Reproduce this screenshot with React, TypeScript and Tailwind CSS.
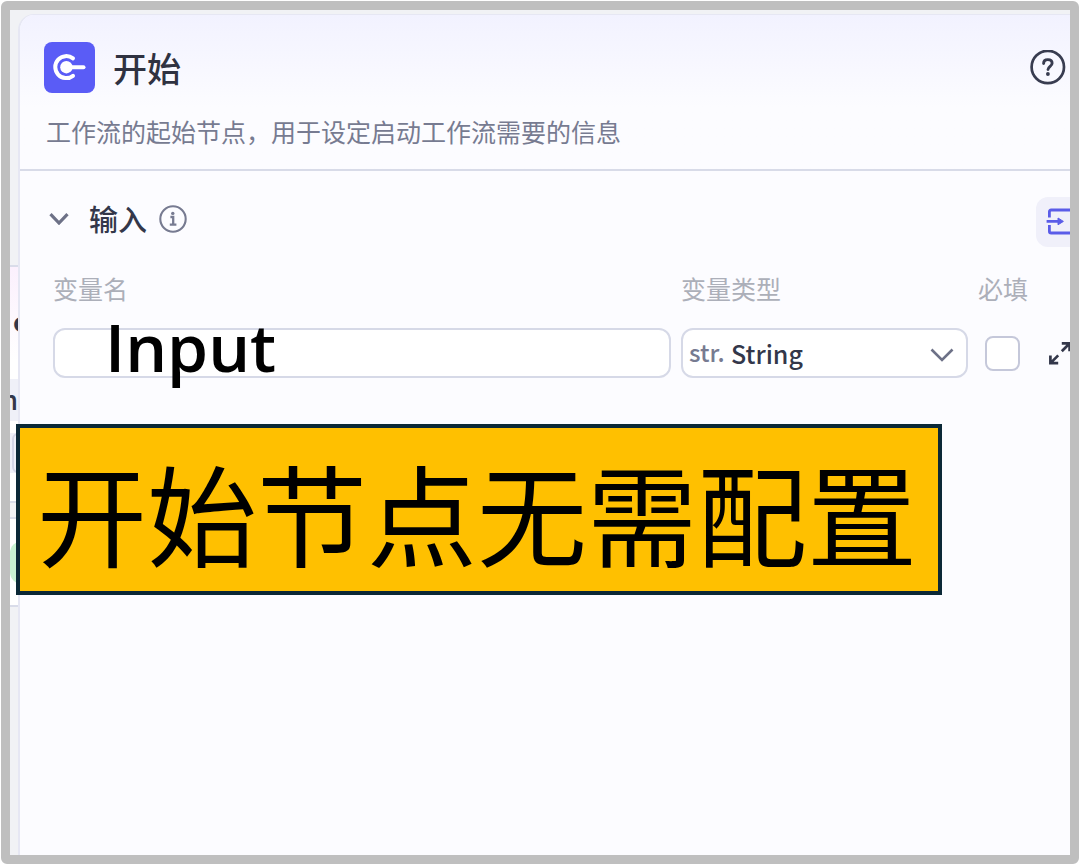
import { useState } from 'react';

function StartLogo() {
  return (
    <svg viewBox="0 0 51 51" className="h-[51px] w-[51px] shrink-0 rounded-lg bg-[#5a5cf6]" fill="none">
      <path d="M29 16.4 A11 11 0 1 0 29 33.8" stroke="white" strokeWidth="4" strokeLinecap="round" />
      <circle cx="22.4" cy="25.2" r="6.2" fill="white" />
      <path d="M23 25.2 H39.5" stroke="white" strokeWidth="4" strokeLinecap="round" />
    </svg>
  );
}

function HelpIcon() {
  return (
    <svg viewBox="0 0 36 36" className="h-9 w-9" fill="none" stroke="#383c50">
      <circle cx="17.8" cy="17" r="16.2" strokeWidth="2.7" />
      <path d="M13.6 13.6 C13.6 10.9 15.4 9.6 17.8 9.6 C20.3 9.6 22.1 11 22.1 13.2 C22.1 16.2 18 16.4 18 19.6" strokeWidth="2.9" strokeLinecap="round" />
      <circle cx="17.9" cy="24" r="1.9" fill="#383c50" stroke="none" />
    </svg>
  );
}

function InfoIcon() {
  return (
    <svg viewBox="0 0 28 28" className="h-7 w-7" fill="none" stroke="#777b91">
      <circle cx="14" cy="14" r="12.7" strokeWidth="2.1" />
      <path d="M11.4 12 H14.2 V19.4 M10.8 19.6 H17.4" strokeWidth="2.3" />
      <circle cx="13.8" cy="8.4" r="1.7" fill="#777b91" stroke="none" />
    </svg>
  );
}

function ImportIcon() {
  return (
    <svg viewBox="0 0 30 30" className="h-[30px] w-[30px] shrink-0" fill="none" stroke="#5a5ce8" strokeWidth="2.8">
      <path d="M3.4 10.5 V4.8 Q3.4 3 5.2 3 H24.8 Q26.6 3 26.6 4.8 V24.2 Q26.6 26 24.8 26 H5.2 Q3.4 26 3.4 24.2 V18" />
      <path d="M0.6 14.4 H13" strokeWidth="2.6" />
      <path d="M12 11 L17.4 14.4 L12 17.8 Z" fill="#5a5ce8" strokeWidth="1" />
    </svg>
  );
}

function ExpandIcon() {
  return (
    <svg viewBox="0 0 24 24" className="h-6 w-6 shrink-0" fill="none" stroke="#33374a" strokeWidth="2.7">
      <path d="M13.8 2.4 H21.6 V10.2 M21 3 L13.8 10.2" />
      <path d="M2.4 14.4 V22.2 H10.2 M3 21.6 L10.2 14.4" />
    </svg>
  );
}

// edge of the workflow canvas that stays visible next to the drawer
function CanvasEdge() {
  return (
    <div className="flex w-2 shrink-0 flex-col overflow-hidden bg-[#f1f2f5] text-[#33374a]" aria-hidden="true">
      <div className="h-[255px] shrink-0" />
      <div className="h-[238px] shrink-0 border-y-2 border-[#d9dce9] bg-linear-to-b from-[#fbf0fd] to-white to-40%">
        <div className="h-[112px] pt-9 pl-[3px] text-[27px] leading-9 font-bold">o</div>
        <div className="flex h-[42px] justify-end bg-[#eff0f8] text-[27px] leading-10 font-medium">n</div>
        <div className="mt-3 h-10 bg-[#eff0f8] pl-0.5">
          <div className="h-full w-4 rounded-md border-2 border-[#d4d6e6]" />
        </div>
      </div>
      <div className="h-[14px] shrink-0" />
      <div className="h-[90px] shrink-0 border-y-2 border-[#d9dce9] bg-white pt-[22px]">
        <div className="h-[43px] w-6 rounded-xl bg-[#c8f2d2]" />
      </div>
    </div>
  );
}

export default function App() {
  const [open, setOpen] = useState(true);
  const [name, setName] = useState('');
  const [required, setRequired] = useState(false);

  return (
    <main className="flex min-h-screen bg-white p-px font-['Noto_Sans_CJK_SC',sans-serif]">
      <div className="relative flex min-w-0 flex-1 overflow-hidden rounded-md border-[9px] border-[#bfbfbf] bg-[#f1f2f5]">
        <CanvasEdge />

        <section className="mt-1 min-w-0 flex-1 overflow-hidden rounded-tl-2xl border-t border-l-2 border-[#e6e7f3] bg-[#fcfcff]">
          <header className="border-b-2 border-[#d8dbe8] bg-linear-to-b from-[#f2f2ff] to-[#fcfcff] to-60% pt-[27px] pr-1 pb-[22px] pl-6">
            <div className="flex items-center">
              <StartLogo />
              <h1 className="ml-[18px] flex-1 text-[34px] leading-[51px] font-medium text-[#2f3241]">开始</h1>
              <button type="button" aria-label="帮助">
                <HelpIcon />
              </button>
            </div>
            <p className="mt-[22px] pl-0.5 text-[25px] leading-8 text-[#777b91]">工作流的起始节点，用于设定启动工作流需要的信息</p>
          </header>

          <div className="pt-[26px] pl-[33px]">
            <div className="flex h-[50px] items-start">
              <button
                type="button"
                aria-expanded={open}
                onClick={() => setOpen(!open)}
                className="-ml-1 flex items-center text-[29px] leading-[42px] font-medium text-[#33374a]"
              >
                <svg viewBox="0 0 20 14" className="mr-5 h-[14px] w-5" fill="none" stroke="#6d7187" strokeWidth="3.2">
                  <path d="M1.5 3.2 L10 12 L18.5 3.2" />
                </svg>
                输入
              </button>
              <span className="mt-2 ml-3 flex-1">
                <InfoIcon />
              </span>
              <button
                type="button"
                aria-label="导入"
                className="-mr-4 flex h-[50px] w-[50px] items-center rounded-xl bg-[#f0f0fa] pl-[10px]"
              >
                <ImportIcon />
              </button>
            </div>

            {open && (
              <div className="mt-[25px] grid grid-cols-[1fr_287px_50px_32px] gap-x-[10px] gap-y-6">
                <label htmlFor="name" className="text-[25px] leading-8 text-[#acafb9]">变量名</label>
                <label htmlFor="type" className="text-[25px] leading-8 text-[#acafb9]">变量类型</label>
                <label htmlFor="required" className="text-[25px] leading-8 text-[#acafb9]">必填</label>
                <span />

                <div className="relative">
                  <input
                    id="name"
                    value={name}
                    onChange={(e) => setName(e.target.value)}
                    className="h-[50px] w-full rounded-xl border-2 border-[#d6d9e7] bg-white px-3 text-[25px]"
                  />
                  <span className="pointer-events-none absolute -top-7 left-[52px] font-['Open_Sans',sans-serif] text-[66px] leading-[92px] font-semibold text-black">
                    Input
                  </span>
                </div>
                <div className="relative">
                  <select
                    id="type"
                    className="h-[50px] w-full appearance-none rounded-xl border-2 border-[#d6d9e7] bg-white pt-0.5 pl-12 text-[25px] font-medium text-[#33374a]"
                  >
                    <option>String</option>
                  </select>
                  <span className="pointer-events-none absolute top-1.5 left-2 text-[24px] leading-9 font-medium text-[#777b91]">str.</span>
                  <svg viewBox="0 0 24 14" className="pointer-events-none absolute top-5 right-[14px] h-[14px] w-6" fill="none" stroke="#6d7187" strokeWidth="2.6">
                    <path d="M1.5 1.5 L12 12 L22.5 1.5" />
                  </svg>
                </div>
                <div className="flex items-center">
                  <input
                    id="required"
                    type="checkbox"
                    checked={required}
                    onChange={(e) => setRequired(e.target.checked)}
                    className="ml-[7px] h-[35px] w-[35px] appearance-none rounded-lg border-2 border-[#c5c8da] bg-white checked:bg-[#5a5cf6]"
                  />
                </div>
                <button type="button" aria-label="展开" className="flex items-center pl-[10px]">
                  <ExpandIcon />
                </button>
              </div>
            )}
          </div>
        </section>

        {/* callout over the drawer */}
        <div className="absolute top-[414px] left-1.5 border-4 border-[#0b2836] bg-[#ffc000] pt-1 pr-[21px] pl-[17px] text-[110px] leading-[159px] whitespace-nowrap text-black">
          开始节点无需配置
        </div>
      </div>
    </main>
  );
}
